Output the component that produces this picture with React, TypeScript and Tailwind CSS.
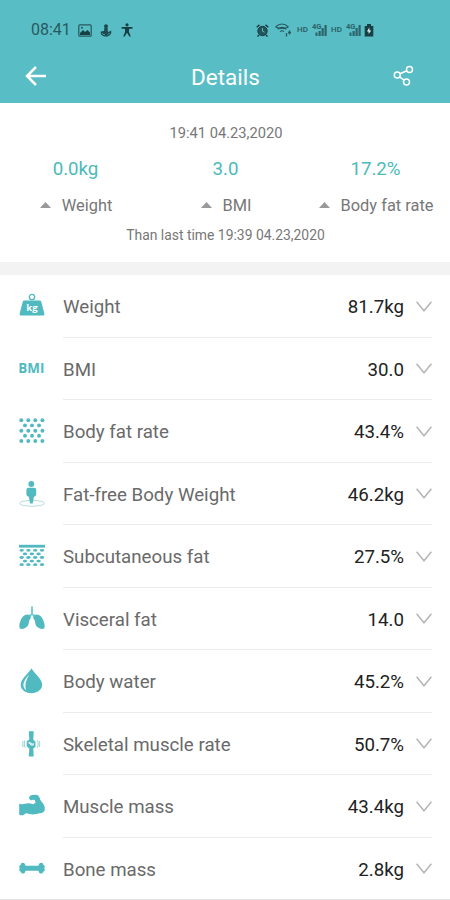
import type { ReactNode } from 'react';

interface Metric {
  label: string;
  value: string;
  icon: ReactNode;
}

const TEAL = '#50bac0';

function Glyph({ children }: { children: ReactNode }) {
  return (
    <svg viewBox="0 0 26 26" className="h-[26px] w-[26px] overflow-visible" fill={TEAL}>
      {children}
    </svg>
  );
}

function WeightIcon() {
  return (
    <Glyph>
      <circle cx="13" cy="4" r="2.7" fill="none" stroke={TEAL} strokeWidth="1.3" />
      <path d="M5 7.5h16q.9 0 1.2.9l3.2 12.4q.3 1.7-1.2 1.7H1.800q-1.500 0-1.200-1.700l3.200-12.400q.3-.9 1.200-.9z" />
      <text x="13" y="18" textAnchor="middle" fill="#fff" fontFamily="Open Sans" fontSize="9.500" fontWeight="700">
        kg
      </text>
    </Glyph>
  );
}

function BmiIcon() {
  return (
    <Glyph>
      <text x="-.7" y="17" fontFamily="Open Sans" fontSize="13.400" fontWeight="700">
        BMI
      </text>
    </Glyph>
  );
}

function FatIcon() {
  const rows = [2.2, 7.400, 12.700, 17.700, 23];
  return (
    <Glyph>
      {rows.map((y, i) =>
        (i % 2 ? [6, 13, 20] : [2.3, 9.300, 16.300, 23.400]).map((x) => (
          <circle key={`${x}-${y}`} cx={x} cy={y} r="1.950" />
        )),
      )}
    </Glyph>
  );
}

function BodyIcon() {
  return (
    <Glyph>
      <ellipse cx="13" cy="22.300" rx="12.500" ry="2.900" fill="none" stroke="#b5dcde" strokeWidth="1" />
      <circle cx="12.300" cy="3" r="2.900" />
      <path d="M9.600 6.800h5.400q2.200 0 2.200 2v4.800q0 1.800-2.300 2.200l-1.200 6.700h-2.600l-1.300-6.700q-2.400-.4-2.400-2.200V8.800q0-2 2.200-2z" />
    </Glyph>
  );
}

function SubcutaneousIcon() {
  const rows = [7.300, 10.900, 14.500, 18.100, 21.700];
  return (
    <Glyph>
      <rect x="0" y="1.800" width="26" height="2.800" />
      {rows.map((y, i) =>
        (i % 2 ? [6, 12.800, 19.600] : [2.700, 9.400, 16.200, 23]).map((x) => (
          <ellipse key={`${x}-${y}`} cx={x} cy={y} rx="2.200" ry="1.400" />
        )),
      )}
    </Glyph>
  );
}

function LungsIcon() {
  return (
    <Glyph>
      <path d="M12 .500h2v7l5 4-1 2-5-4.300L8 13.500l-1-2 5-4z" opacity=".75" />
      <path d="M10.800 9.200C5.500 6.500.8 13 .3 20c-.2 3.600 2.700 3.500 5.800 2 3.800-1.700 3.500-4.500 3.900-7l2-3.600z" />
      <path d="M15.200 9.200c5.300-2.700 10 3.800 10.500 10.800.2 3.600-2.700 3.500-5.800 2-3.800-1.700-3.500-4.500-3.900-7l-2-3.600z" />
    </Glyph>
  );
}

function WaterIcon() {
  return (
    <Glyph>
      <path d="M12.500.3C9.700 5.600 1.700 10.800 1.700 16.800c0 5 4.600 8.400 10.600 8.400s10.900-3.400 10.900-8.400C23.200 10.800 15.300 5.600 12.500.3z" />
      <path d="M10.500 6.500C3.800 12.800 2.500 18.500 7 22.300 5.600 17 6.800 12 10.500 6.500z" fill="#fff" opacity=".9" />
    </Glyph>
  );
}

function JointIcon() {
  return (
    <Glyph>
      <path d="M9.800.3h4.900L14.300 8.500l2.200 2.500v4.800l-2.200 1.700.4 8h-4.900l.5-8-2.600-2.300v-4.600l2.600-2.100z" />
      <path d="M8.500 11.400q2.500-1 4.500.8l2.500.4-1 2q-3 .5-3.800-1.400z" fill="#fff" opacity=".75" />
      <path
        d="M6 9.200q-1.500 3.800 0 7.600M4.200 10q-1 2.800 0 6M18.500 9.200q1.500 3.800 0 7.600M20.300 10q1 2.800 0 6"
        fill="none"
        stroke="#9dd4d6"
        strokeWidth="1"
      />
    </Glyph>
  );
}

function MuscleIcon() {
  return (
    <Glyph>
      <path d="M.2 10.700q2.300.8 4.700.2c3.500-.9 5.800-1 9.300.4l2.500-1.700-1-2.600-2-.3q-1.300 1-2.400.2L10 5.300q.1-2.700 3-3.300l4.200-.2q2.400.2 3.200 2.400.7 2.700 2.200 4.600 3.400 3.200 3.200 7.500c-.2 3-2.700 3.900-6.200 4.300-4.500 1.200-8.200 1-12.200-.3q-1.500.2-2.600 1.600-2.400.7-4.600-.2z" />
    </Glyph>
  );
}

function BoneIcon() {
  return (
    <Glyph>
      <path d="M6.500 10.700h13q.4-2.900 2.800-2.900 2 .2 2 2 1.500.5 1.500 1.700 0 1-.7 1.700.7.8.7 1.800 0 1.300-1.500 1.700-.2 1.700-2 1.900-2.400 0-2.800-2.900h-13q-.4 2.900-2.800 2.900-1.800-.2-2-1.900-1.500-.4-1.500-1.700 0-1 .7-1.800-.7-.7-.7-1.700 0-1.200 1.500-1.700 0-1.800 2-2 2.400 0 2.800 2.900z" />
    </Glyph>
  );
}

const metrics: Metric[] = [
  { label: 'Weight', value: '81.7kg', icon: <WeightIcon /> },
  { label: 'BMI', value: '30.0', icon: <BmiIcon /> },
  { label: 'Body fat rate', value: '43.4%', icon: <FatIcon /> },
  { label: 'Fat-free Body Weight', value: '46.2kg', icon: <BodyIcon /> },
  { label: 'Subcutaneous fat', value: '27.5%', icon: <SubcutaneousIcon /> },
  { label: 'Visceral fat', value: '14.0', icon: <LungsIcon /> },
  { label: 'Body water', value: '45.2%', icon: <WaterIcon /> },
  { label: 'Skeletal muscle rate', value: '50.7%', icon: <JointIcon /> },
  { label: 'Muscle mass', value: '43.4kg', icon: <MuscleIcon /> },
  { label: 'Bone mass', value: '2.8kg', icon: <BoneIcon /> },
];

const changes = [
  { label: 'Weight', value: '0.0kg' },
  { label: 'BMI', value: '3.0' },
  { label: 'Body fat rate', value: '17.2%' },
];

function Signal() {
  return (
    <svg viewBox="0 0 16 14" className="h-[14px] w-[16px]" fill="#2d646a">
      <text x="0" y="6" fontSize="7.500" fontWeight="700">
        4G
      </text>
      <path d="M3.500 13V9.500h2V13zM6.500 13V8h2.200v5zM9.500 13V5h2.200v8zM12.500 13V2h2.200v11z" />
    </svg>
  );
}

function StatusBar() {
  return (
    <div className="flex h-12 items-center pt-3 pl-[31px] text-[#28595f]">
      <span className="w-[39px] text-[16px] leading-none">08:41</span>
      <svg viewBox="0 0 14 13" className="ml-2 h-[13px] w-[14px]">
        <rect x=".8" y=".8" width="12.400" height="11.400" rx="1" fill="none" stroke="currentColor" strokeWidth="1.200" />
        <path d="M2 11V9l3-3 2 2 2.500-2L12 8.500V11z" fill="#173f44" />
        <circle cx="4" cy="3.800" r="1" fill="currentColor" />
      </svg>
      <svg viewBox="0 0 12 13" className="ml-2 h-[13px] w-[12px]" fill="#1d4b51">
        <circle cx="6" cy="2.300" r="2" />
        <path d="M4.300 4h3.400v3l1 1 2.500-1.500Q12 11 7.500 12.500h-3Q0 11.500.8 7.500L4 7z" />
        <path d="M2 9.300q1.500 1.700 3 1.500M9.500 9q-1 1.500-2 1.800" fill="none" stroke="#58bdc5" strokeWidth=".8" />
      </svg>
      <svg viewBox="0 0 12 14" className="ml-[9px] h-[14px] w-[12px]" fill="#173f44">
        <circle cx="6" cy="1.800" r="1.600" />
        <path d="M.5 4h11v1.400L8 6v3l1.800 4.500H8.300L6 9.800l-2.300 3.700H2.200L4 9V6L.5 5.400z" />
      </svg>
      <svg viewBox="0 0 13 13" className="ml-[123px] h-[13px] w-[13px]">
        <circle cx="6.500" cy="7" r="4.700" fill="#23555b" stroke="#173f44" strokeWidth="1" />
        <path d="M.7 3.300 3.500.9M12.300 3.300 9.500.9M3 11l-1.500 1.500M10 11l1.500 1.500" stroke="#173f44" strokeWidth="1.500" />
        <path d="M6.500 4.200V7.200l2 1" fill="none" stroke="#58bdc5" strokeWidth="1" />
      </svg>
      <svg viewBox="0 0 17 14" className="ml-[6px] h-[14px] w-[17px]" fill="none" stroke="#28595f">
        <path d="M.5 4Q7-2 13.500 4M2.800 6.300Q7 2.500 11.200 6.300M5 8.600Q7 6.800 9 8.600M.5 4Q7 7 13.500 4" strokeWidth="1.100" />
        <path d="M11.500 10v3.500M14.500 7.500v4M13 9.500h3" strokeWidth="1.300" />
      </svg>
      <span className="ml-[5px] w-[13px] text-[8px] font-medium">HD</span>
      <span className="ml-[2px]"><Signal /></span>
      <span className="ml-[3px] w-[13px] text-[8px] font-medium">HD</span>
      <span className="ml-[2px]"><Signal /></span>
      <svg viewBox="0 0 10 14" className="ml-[2px] h-[14px] w-[10px]">
        <path d="M3 1h4v2h2.300v10.500H.7V3H3z" fill="#173f44" />
        <path d="M5.300 4.500 3 8.500h1.600V11L7.300 7.500H5.500z" fill="#d8f4f5" />
      </svg>
    </div>
  );
}

function Header() {
  return (
    <header className="h-[103px] bg-[#58bdc5]">
      <StatusBar />
      <div className="flex h-[55px] items-center justify-between pr-9 pl-[25px] text-white">
        <button type="button" aria-label="Back" className="w-[22px]">
          <svg viewBox="0 0 22 20" className="h-5 w-[22px]" fill="none" stroke="currentColor" strokeWidth="2.500">
            <path d="M11 1 2 10l9 9M2 10h19" />
          </svg>
        </button>
        <h1 className="pt-[3px] pl-[11px] text-[22.500px] leading-none">Details</h1>
        <button type="button" aria-label="Share" className="w-[21px]">
          <svg viewBox="0 0 21 21" className="h-[21px] w-[21px]" fill="none" stroke="currentColor" strokeWidth="1.500">
            <circle cx="4.300" cy="10" r="3" />
            <circle cx="16.500" cy="4.500" r="3" />
            <circle cx="13.500" cy="17" r="3" />
            <path d="m7 8.800 6.800-3M6.500 12l4.800 3.200" />
          </svg>
        </button>
      </div>
    </header>
  );
}

function Summary() {
  return (
    <section className="h-[159px] pt-5 text-center text-[#777]">
      <p className="h-5 pl-[2px] text-[14.700px] leading-[21px]">19:41 04.23,2020</p>
      <div className="grid grid-cols-3 pt-[14px]">
        {changes.map((c) => (
          <div key={c.label}>
            <p className="pl-px text-[18.700px] leading-6 text-[#4bbab8]">{c.value}</p>
            <div className="mt-3 flex items-center justify-center gap-[11px] pl-[2px] text-[16.400px] leading-6 whitespace-nowrap">
              <svg viewBox="0 0 11 6" className="-mt-[2px] h-[6px] w-[11px]" fill="#999">
                <path d="M5.500 0 11 6H0z" />
              </svg>
              <span className="pt-px">{c.label}</span>
            </div>
          </div>
        ))}
      </div>
      <p className="mt-[7px] h-5 pl-px text-[13.900px] leading-5">Than last time 19:39 04.23,2020</p>
    </section>
  );
}

function MetricRow({ metric, last }: { metric: Metric; last: boolean }) {
  return (
    <li className={last ? 'flex h-[62.500px] border-b border-[#e4e4e4] pr-[18px] pl-[19px]' : 'flex h-[62.500px] pr-[18px] pl-[19px]'}>
      <div className="flex w-11 items-center">{metric.icon}</div>
      <div className={last ? 'flex flex-1 items-center' : 'flex flex-1 items-center border-b border-[#ebebeb]'}>
        <span className="flex-1 pt-[3px] text-[18.700px] leading-7 text-[#6a6a6a]">{metric.label}</span>
        <span className="pt-[3px] text-[18.700px] leading-7 text-[#222]">{metric.value}</span>
        <svg viewBox="0 0 16 11" className="mt-px ml-3 h-[11px] w-[16px]" fill="none" stroke="#b5b5b5" strokeWidth="1.500">
          <path d="m.6.700 7.400 9 7.400-9" />
        </svg>
      </div>
    </li>
  );
}

export default function App() {
  return (
    <div className="h-[900px] w-[450px] overflow-hidden bg-white font-['Roboto',sans-serif]">
      <Header />
      <Summary />
      <div className="h-[13px] bg-[#f3f3f3]" />
      <ul>
        {metrics.map((m, i) => (
          <MetricRow key={m.label} metric={m} last={i === metrics.length - 1} />
        ))}
      </ul>
    </div>
  );
}
